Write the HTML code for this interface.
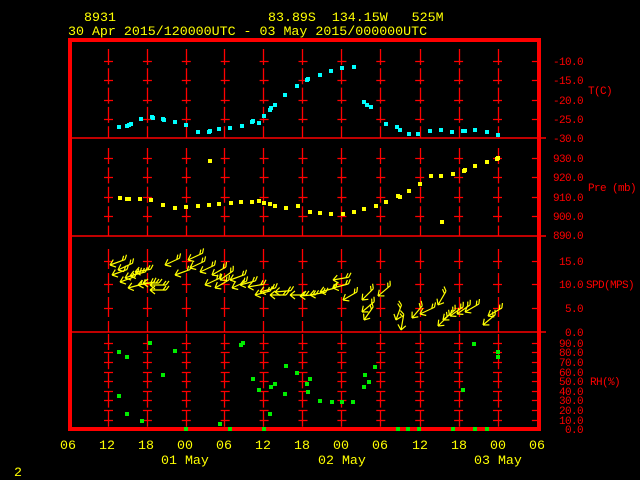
<!DOCTYPE html>
<html><head><meta charset="utf-8"><style>
html,body{margin:0;padding:0;background:#000;}
svg{display:block;}
text{font-family:"Liberation Mono",monospace;white-space:pre;}
</style></head><body>
<svg width="640" height="480" viewBox="0 0 640 480" xmlns="http://www.w3.org/2000/svg">
<rect width="640" height="480" fill="#000"/>
<g fill="#ffff00" font-size="13.3">
<text x="84" y="21">8931</text>
<text x="268" y="21" xml:space="preserve">83.89S  134.15W   525M</text>
<text x="68" y="35">30 Apr 2015/120000UTC - 03 May 2015/000000UTC</text>
</g>
<g stroke="#ff0000" stroke-width="1.3" fill="none">
<path stroke-dasharray="16 3.3" d="M108.5 49V138M147.5 49V138M186.5 49V138M224.5 49V138M263.5 49V138M302.5 49V138M341.5 49V138M380.5 49V138M420.5 49V138M459.5 49V138M498.5 49V138"/>
<path stroke-dasharray="16 3.4" d="M108.5 148V236M147.5 148V236M186.5 148V236M224.5 148V236M263.5 148V236M302.5 148V236M341.5 148V236M380.5 148V236M420.5 148V236M459.5 148V236M498.5 148V236"/>
<path stroke-dasharray="20 4" d="M108.5 249V332M147.5 249V332M186.5 249V332M224.5 249V332M263.5 249V332M302.5 249V332M341.5 249V332M380.5 249V332M420.5 249V332M459.5 249V332M498.5 249V332"/>
<path stroke-dasharray="16 3.2" d="M108.5 334V428M147.5 334V428M186.5 334V428M224.5 334V428M263.5 334V428M302.5 334V428M341.5 334V428M380.5 334V428M420.5 334V428M459.5 334V428M498.5 334V428"/>
<path stroke-dasharray="9 29.9" d="M104 61.5H548M104 80.5H548M104 100.5H548M104 119.5H548M104 158.5H548M104 177.5H548M104 197.5H548M104 216.5H548M104 261.5H548M104 284.5H548M104 308.5H548M104 343.5H548M104 352.5H548M104 362.5H548M104 372.5H548M104 381.5H548M104 391.5H548M104 400.5H548M104 410.5H548M104 420.5H548"/>
<path stroke-width="1.5" d="M70 138H546M70 236H546M70 332H546"/>
</g>
<g fill="#ff0000">
<rect x="68" y="38" width="473" height="4"/>
<rect x="68" y="38" width="4" height="393"/>
<rect x="537" y="38" width="4" height="393"/>
<rect x="68" y="427" width="473" height="4"/>
</g>
<g fill="#ff0000" font-size="11" letter-spacing="-0.6">
<text x="553" y="65">-10.0</text>
<text x="553" y="84">-15.0</text>
<text x="553" y="104">-20.0</text>
<text x="553" y="123">-25.0</text>
<text x="553" y="142">-30.0</text>
<text x="588" y="94">T(C)</text>
<text x="553" y="162">930.0</text>
<text x="553" y="181">920.0</text>
<text x="553" y="201">910.0</text>
<text x="553" y="220">900.0</text>
<text x="553" y="239">890.0</text>
<text x="588" y="191">Pre (mb)</text>
<text x="559" y="265">15.0</text>
<text x="559" y="288">10.0</text>
<text x="565" y="312">5.0</text>
<text x="565" y="336">0.0</text>
<text x="586" y="288">SPD(MPS)</text>
<text x="559" y="347">90.0</text>
<text x="559" y="356">80.0</text>
<text x="559" y="366">70.0</text>
<text x="559" y="376">60.0</text>
<text x="559" y="385">50.0</text>
<text x="559" y="395">40.0</text>
<text x="559" y="404">30.0</text>
<text x="559" y="414">20.0</text>
<text x="559" y="424">10.0</text>
<text x="565" y="433">0.0</text>
<text x="590" y="385">RH(%)</text>
</g>
<g fill="#00ffff">
<rect x="117" y="125" width="4" height="4"/><rect x="125" y="124" width="4" height="4"/><rect x="127" y="123" width="4" height="4"/><rect x="129" y="122" width="4" height="4"/><rect x="139" y="117" width="4" height="4"/><rect x="150" y="115" width="4" height="4"/><rect x="151" y="116" width="4" height="4"/><rect x="161" y="117" width="4" height="4"/><rect x="162" y="118" width="4" height="4"/><rect x="173" y="120" width="4" height="4"/><rect x="184" y="123" width="4" height="4"/><rect x="196" y="130" width="4" height="4"/><rect x="207" y="130" width="4" height="4"/><rect x="208" y="129" width="4" height="4"/><rect x="217" y="127" width="4" height="4"/><rect x="228" y="126" width="4" height="4"/><rect x="240" y="124" width="4" height="4"/><rect x="250" y="120" width="4" height="4"/><rect x="251" y="119" width="4" height="4"/><rect x="257" y="121" width="4" height="4"/><rect x="262" y="114" width="4" height="4"/><rect x="268" y="108" width="4" height="4"/><rect x="269" y="106" width="4" height="4"/><rect x="273" y="103" width="4" height="4"/><rect x="283" y="93" width="4" height="4"/><rect x="295" y="84" width="4" height="4"/><rect x="305" y="78" width="4" height="4"/><rect x="306" y="77" width="4" height="4"/><rect x="318" y="73" width="4" height="4"/><rect x="329" y="69" width="4" height="4"/><rect x="340" y="66" width="4" height="4"/><rect x="352" y="65" width="4" height="4"/><rect x="362" y="100" width="4" height="4"/><rect x="365" y="103" width="4" height="4"/><rect x="369" y="105" width="4" height="4"/><rect x="384" y="122" width="4" height="4"/><rect x="395" y="125" width="4" height="4"/><rect x="398" y="128" width="4" height="4"/><rect x="407" y="132" width="4" height="4"/><rect x="416" y="132" width="4" height="4"/><rect x="428" y="129" width="4" height="4"/><rect x="439" y="128" width="4" height="4"/><rect x="450" y="130" width="4" height="4"/><rect x="461" y="129" width="4" height="4"/><rect x="463" y="129" width="4" height="4"/><rect x="473" y="128" width="4" height="4"/><rect x="485" y="130" width="4" height="4"/><rect x="496" y="133" width="4" height="4"/>
</g>
<g fill="#ffff00">
<rect x="118" y="196" width="4" height="4"/><rect x="125" y="197" width="4" height="4"/><rect x="127" y="197" width="4" height="4"/><rect x="138" y="197" width="4" height="4"/><rect x="149" y="198" width="4" height="4"/><rect x="161" y="203" width="4" height="4"/><rect x="173" y="206" width="4" height="4"/><rect x="184" y="205" width="4" height="4"/><rect x="196" y="204" width="4" height="4"/><rect x="208" y="159" width="4" height="4"/><rect x="207" y="203" width="4" height="4"/><rect x="217" y="202" width="4" height="4"/><rect x="229" y="201" width="4" height="4"/><rect x="239" y="200" width="4" height="4"/><rect x="250" y="200" width="4" height="4"/><rect x="257" y="199" width="4" height="4"/><rect x="262" y="201" width="4" height="4"/><rect x="268" y="202" width="4" height="4"/><rect x="273" y="204" width="4" height="4"/><rect x="284" y="206" width="4" height="4"/><rect x="296" y="204" width="4" height="4"/><rect x="308" y="210" width="4" height="4"/><rect x="318" y="211" width="4" height="4"/><rect x="329" y="212" width="4" height="4"/><rect x="341" y="212" width="4" height="4"/><rect x="352" y="210" width="4" height="4"/><rect x="362" y="207" width="4" height="4"/><rect x="374" y="204" width="4" height="4"/><rect x="384" y="200" width="4" height="4"/><rect x="396" y="194" width="4" height="4"/><rect x="398" y="195" width="4" height="4"/><rect x="407" y="189" width="4" height="4"/><rect x="418" y="182" width="4" height="4"/><rect x="429" y="174" width="4" height="4"/><rect x="439" y="174" width="4" height="4"/><rect x="451" y="172" width="4" height="4"/><rect x="462" y="169" width="4" height="4"/><rect x="463" y="168" width="4" height="4"/><rect x="440" y="220" width="4" height="4"/><rect x="473" y="164" width="4" height="4"/><rect x="485" y="160" width="4" height="4"/><rect x="495" y="157" width="4" height="4"/><rect x="496" y="156" width="4" height="4"/>
</g>
<defs><path id="w" d="M0 0L16 0M0 0L5 -4M0 0L5 4M16 0L19 -4M13 0L16 -4" stroke="#ffff00" stroke-width="1.2" fill="none"/></defs>
<g>
<use href="#w" transform="translate(110,265) rotate(-20)"/><use href="#w" transform="translate(112,275) rotate(-20)"/><use href="#w" transform="translate(118,270) rotate(-25)"/><use href="#w" transform="translate(120,282) rotate(-20)"/><use href="#w" transform="translate(125,278) rotate(-20)"/><use href="#w" transform="translate(130,276) rotate(-15)"/><use href="#w" transform="translate(135,272) rotate(-10)"/><use href="#w" transform="translate(128,288) rotate(-15)"/><use href="#w" transform="translate(138,285) rotate(-10)"/><use href="#w" transform="translate(143,283) rotate(0)"/><use href="#w" transform="translate(150,285) rotate(0)"/><use href="#w" transform="translate(150,290) rotate(0)"/><use href="#w" transform="translate(165,265) rotate(-25)"/><use href="#w" transform="translate(175,275) rotate(-20)"/><use href="#w" transform="translate(188,260) rotate(-25)"/><use href="#w" transform="translate(190,268) rotate(-25)"/><use href="#w" transform="translate(200,272) rotate(-25)"/><use href="#w" transform="translate(205,285) rotate(-25)"/><use href="#w" transform="translate(212,275) rotate(-30)"/><use href="#w" transform="translate(215,288) rotate(-30)"/><use href="#w" transform="translate(220,280) rotate(-35)"/><use href="#w" transform="translate(230,280) rotate(-20)"/><use href="#w" transform="translate(232,288) rotate(-25)"/><use href="#w" transform="translate(240,285) rotate(-15)"/><use href="#w" transform="translate(248,287) rotate(-10)"/><use href="#w" transform="translate(255,295) rotate(-15)"/><use href="#w" transform="translate(260,292) rotate(-15)"/><use href="#w" transform="translate(270,295) rotate(0)"/><use href="#w" transform="translate(275,292) rotate(-5)"/><use href="#w" transform="translate(290,295) rotate(0)"/><use href="#w" transform="translate(300,296) rotate(-5)"/><use href="#w" transform="translate(310,295) rotate(-10)"/><use href="#w" transform="translate(320,292) rotate(-15)"/><use href="#w" transform="translate(333,288) rotate(-15)"/><use href="#w" transform="translate(333,280) rotate(-10)"/><use href="#w" transform="translate(343,300) rotate(-30)"/><use href="#w" transform="translate(362,312) rotate(-40)"/><use href="#w" transform="translate(362,300) rotate(-45)"/><use href="#w" transform="translate(378,296) rotate(-40)"/><use href="#w" transform="translate(364,320) rotate(-55)"/><use href="#w" transform="translate(396,320) rotate(-70)"/><use href="#w" transform="translate(401,330) rotate(-80)"/><use href="#w" transform="translate(412,318) rotate(-50)"/><use href="#w" transform="translate(420,314) rotate(-25)"/><use href="#w" transform="translate(438,305) rotate(-60)"/><use href="#w" transform="translate(438,326) rotate(-45)"/><use href="#w" transform="translate(443,320) rotate(-40)"/><use href="#w" transform="translate(450,316) rotate(-35)"/><use href="#w" transform="translate(457,314) rotate(-35)"/><use href="#w" transform="translate(465,312) rotate(-30)"/><use href="#w" transform="translate(483,325) rotate(-40)"/><use href="#w" transform="translate(488,316) rotate(-30)"/>
</g>
<g fill="#00ee00">
<rect x="117" y="350" width="4" height="4"/><rect x="125" y="355" width="4" height="4"/><rect x="148" y="341" width="4" height="4"/><rect x="117" y="394" width="4" height="4"/><rect x="125" y="412" width="4" height="4"/><rect x="140" y="419" width="4" height="4"/><rect x="173" y="349" width="4" height="4"/><rect x="161" y="373" width="4" height="4"/><rect x="239" y="343" width="4" height="4"/><rect x="241" y="341" width="4" height="4"/><rect x="251" y="377" width="4" height="4"/><rect x="257" y="388" width="4" height="4"/><rect x="268" y="412" width="4" height="4"/><rect x="269" y="385" width="4" height="4"/><rect x="273" y="382" width="4" height="4"/><rect x="283" y="392" width="4" height="4"/><rect x="284" y="364" width="4" height="4"/><rect x="295" y="371" width="4" height="4"/><rect x="305" y="382" width="4" height="4"/><rect x="308" y="377" width="4" height="4"/><rect x="306" y="390" width="4" height="4"/><rect x="318" y="399" width="4" height="4"/><rect x="330" y="400" width="4" height="4"/><rect x="340" y="400" width="4" height="4"/><rect x="351" y="400" width="4" height="4"/><rect x="362" y="385" width="4" height="4"/><rect x="367" y="380" width="4" height="4"/><rect x="363" y="373" width="4" height="4"/><rect x="373" y="365" width="4" height="4"/><rect x="472" y="342" width="4" height="4"/><rect x="496" y="355" width="4" height="4"/><rect x="496" y="350" width="4" height="4"/><rect x="461" y="388" width="4" height="4"/><rect x="218" y="422" width="4" height="4"/>
<rect x="184" y="427" width="4" height="4"/><rect x="228" y="427" width="4" height="4"/><rect x="262" y="427" width="4" height="4"/><rect x="396" y="427" width="4" height="4"/><rect x="406" y="427" width="4" height="4"/><rect x="417" y="427" width="4" height="4"/><rect x="451" y="427" width="4" height="4"/><rect x="473" y="427" width="4" height="4"/><rect x="485" y="427" width="4" height="4"/>
</g>
<g fill="#ffff00" font-size="13.3">
<text x="60" y="449">06</text><text x="99" y="449">12</text><text x="138" y="449">18</text><text x="177" y="449">00</text><text x="216" y="449">06</text><text x="255" y="449">12</text><text x="294" y="449">18</text><text x="333" y="449">00</text><text x="372" y="449">06</text><text x="412" y="449">12</text><text x="451" y="449">18</text><text x="490" y="449">00</text><text x="529" y="449">06</text>
<text x="161" y="464">01 May</text><text x="318" y="464">02 May</text><text x="474" y="464">03 May</text>
<text x="14" y="476">2</text>
</g>
</svg>
</body></html>
